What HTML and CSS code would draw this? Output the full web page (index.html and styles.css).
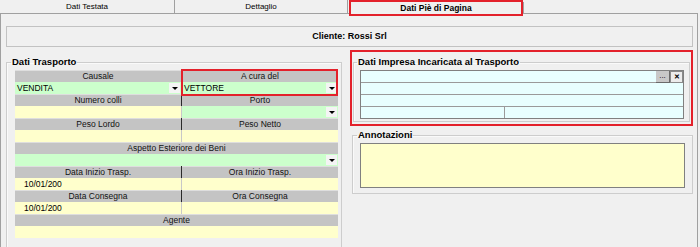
FILE: index.html
```html
<!DOCTYPE html>
<html lang="it">
<head>
  <meta charset="UTF-8">
  <title>Dati Piè di Pagina</title>
  <link rel="stylesheet" href="styles.css">
</head>
<body>
  <!-- Tab strip -->
  <div class="tabs">
    <div class="tab tab-first">Dati Testata</div>
    <div class="tab tab-second">Dettaglio</div>
    <div class="tab-gap"></div>
    <div class="tab tab-active">Dati Piè di Pagina</div>
    <div class="tab-rest"></div>
  </div>

  <div class="pane">
    <div class="cliente">Cliente: Rossi Srl</div>

    <div class="columns">
      <!-- Dati Trasporto -->
      <fieldset class="group group-trasporto">
        <legend>Dati Trasporto</legend>
        <div class="grid">
          <div class="hd hd-left">Causale</div>
          <div class="hd">A cura del</div>
          <div class="sel sel-left"><span class="val">VENDITA</span><span class="dd"></span></div>
          <div class="sel"><span class="val">VETTORE</span><span class="dd"></span></div>

          <div class="hd hd-left">Numero colli</div>
          <div class="hd">Porto</div>
          <div class="in in-left"></div>
          <div class="sel"><span class="val"></span><span class="dd"></span></div>

          <div class="hd hd-left">Peso Lordo</div>
          <div class="hd">Peso Netto</div>
          <div class="in in-left"></div>
          <div class="in"></div>

          <div class="hd full">Aspetto Esteriore dei Beni</div>
          <div class="sel full"><span class="val"></span><span class="dd"></span></div>

          <div class="hd hd-left">Data Inizio Trasp.</div>
          <div class="hd">Ora Inizio Trasp.</div>
          <div class="in in-left date">10/01/200</div>
          <div class="in"></div>

          <div class="hd hd-left">Data Consegna</div>
          <div class="hd">Ora Consegna</div>
          <div class="in in-left date">10/01/200</div>
          <div class="in"></div>

          <div class="hd full">Agente</div>
          <div class="in full"></div>

          <!-- evidenziazione "A cura del" -->
          <div class="mark"></div>
        </div>
      </fieldset>

      <div class="right-col">
        <!-- Dati Impresa -->
        <div class="highlight">
          <fieldset class="group group-impresa">
            <legend>Dati Impresa Incaricata al Trasporto</legend>
            <div class="box-grid">
              <div class="brow">
                <span class="brow-fill"></span>
                <span class="btn btn-dots">...</span>
                <span class="btn btn-x">&#x2715;</span>
              </div>
              <div class="brow"></div>
              <div class="brow"></div>
              <div class="brow brow-split">
                <span class="brow-cell"></span>
                <span class="brow-cell"></span>
              </div>
            </div>
          </fieldset>
        </div>

        <!-- Annotazioni -->
        <fieldset class="group group-note">
          <legend>Annotazioni</legend>
          <div class="note"></div>
        </fieldset>
      </div>
    </div>
  </div>
</body>
</html>
```

FILE: styles.css
```css
/* Global */
html {
  overflow: hidden;
}
body {
  margin: 0;
  background-color: #f0f0f0;
  color: #000;
  font-family: "Liberation Sans", Arial, sans-serif;
  font-size: 8.5px;
  width: 700px;
  height: 247px;
  overflow: hidden;
}
* {
  box-sizing: border-box;
}

/* Tabs */
.tabs {
  display: flex;
  align-items: flex-start;
  width: 698px;
  height: 14px;
}
.tab {
  height: 14px;
  line-height: 13px;
  text-align: center;
  font-size: 8px;
  border-bottom: 1px solid #a0a0a0;
}
.tab-first {
  width: 175px;
  border-right: 1px solid #a0a0a0;
}
.tab-second {
  width: 173px;
  border-right: 1px solid #a0a0a0;
}
.tab-gap {
  width: 1px;
  height: 14px;
  border-bottom: 1px solid #a0a0a0;
}
.tab-active {
  width: 174px;
  height: 16px;
  line-height: 12px;
  font-weight: bold;
  font-size: 8.5px;
  border: 2px solid #e3212b;
}
.tab-rest {
  flex: 1;
  height: 12px;
  margin-top: 2px;
  border-left: 1px solid #a0a0a0;
  border-bottom: 1px solid #a0a0a0;
}

/* Pane */
.pane {
  width: 698px;
  height: 233px;
  border-left: 1px solid #a0a0a0;
  border-right: 1px solid #a0a0a0;
  padding: 12px 4px 0 5px;
  overflow: hidden;
}
.cliente {
  height: 21px;
  line-height: 19px;
  border: 1px solid #c2c2c2;
  text-align: center;
  font-weight: bold;
  font-size: 9px;
}
.columns {
  display: flex;
  align-items: flex-start;
  gap: 8px;
  margin-top: 3px;
}

/* Group boxes */
.group {
  margin: 0;
  min-width: 0;
  border: 1px solid #cdcdcd;
  box-shadow: inset 1px 1px #fafafa;
}
.group legend {
  padding: 0 1px;
  margin-left: -3px;
  line-height: 12px;
  font-size: 9.5px;
  font-weight: bold;
}
.group-trasporto {
  width: 336px;
  margin-top: 6px;
  padding: 2px 3px 9px 8px;
}
.group-trasporto legend {
  margin-left: -4px;
}

/* Trasporto grid */
.grid {
  position: relative;
  display: grid;
  grid-template-columns: 167px 1fr;
  grid-auto-rows: 12px;
  line-height: 12px;
}
.full {
  grid-column: 1 / span 2;
}
.hd {
  background-color: #c4c4c4;
  box-shadow: inset 0 1px #dedede;
  text-align: center;
  color: #111;
}
.hd-left {
  border-right: 1px solid #2a2a2a;
}
.in {
  background-color: #ffffcc;
}
.in-left {
  border-right: 1px solid #c8c8c8;
}
.date {
  padding-left: 9px;
}
.sel {
  display: flex;
  background-color: #ccffcc;
}
.sel-left {
  border-right: 1px solid #2a2a2a;
}
.val {
  flex: 1;
  padding-left: 2px;
}
.dd {
  width: 11px;
  margin: 1px 1px 1px 0;
  background-color: #f4f4f4;
  display: flex;
  align-items: center;
  justify-content: center;
}
.dd::after {
  content: "";
  border-top: 3px solid #000;
  border-left: 3px solid transparent;
  border-right: 3px solid transparent;
}
.mark {
  position: absolute;
  grid-column: 2;
  grid-row: 1 / span 2;
  top: -1px;
  bottom: -2px;
  left: -1px;
  right: 0;
  border: 2px solid #e3212b;
}

/* Right column */
.right-col {
  width: 343px;
}
.highlight {
  border: 2px solid #e3212b;
  padding: 4px 1px 2px 1px;
}
.group-impresa {
  padding: 2px 5px 2px 6px;
}
.box-grid {
  border: 1px solid #808080;
  background-color: #e8ffff;
}
.brow {
  height: 12px;
  border-top: 1px solid #9a9a9a;
  display: flex;
}
.brow:first-child {
  height: 11px;
  border-top: 0;
}
.brow-fill {
  flex: 1;
}
.btn {
  width: 14px;
  height: 12px;
  line-height: 10px;
  text-align: center;
  font-size: 8px;
}
.btn-dots {
  background-color: #c8c8c8;
  border-right: 1px solid #6a6a6a;
  border-bottom: 1px solid #6a6a6a;
}
.btn-x {
  width: 13px;
  background-color: #ececec;
  border: 1px solid #8a8a8a;
  font-weight: bold;
  font-size: 7px;
}
.brow-cell {
  height: 11px;
}
.brow-cell:first-child {
  width: 144px;
  border-right: 1px solid #9a9a9a;
}
.group-note {
  margin: 3px 0 0 2px;
  padding: 2px 7px 5px 7px;
}
.note {
  height: 45px;
  background-color: #ffffcc;
  border: 1px solid #808080;
}
```
